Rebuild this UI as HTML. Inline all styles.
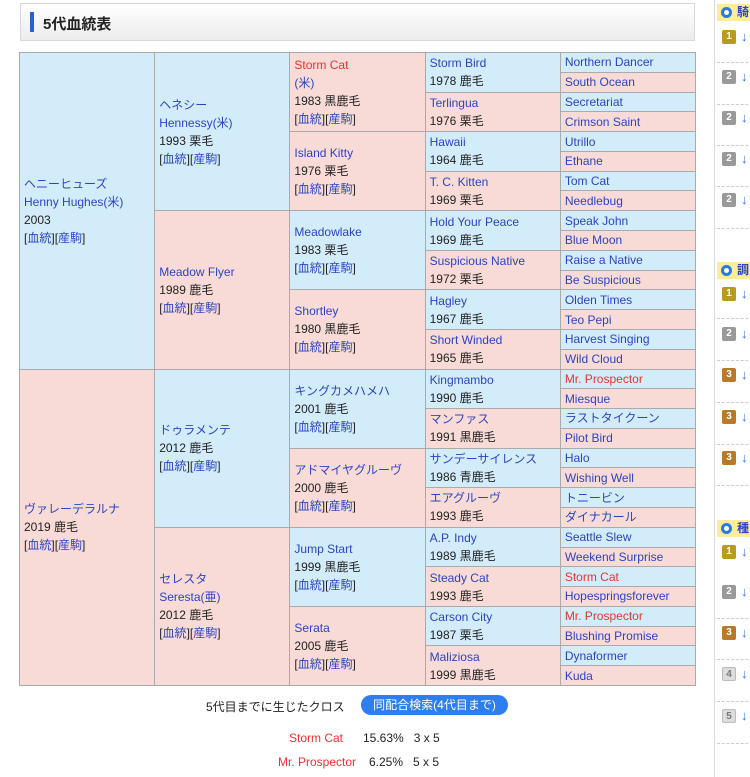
<!DOCTYPE html>
<html><head><meta charset="utf-8"><style>
*{margin:0;padding:0;box-sizing:border-box}
body{width:750px;height:777px;overflow:hidden;background:#fff;font-family:"Liberation Sans","Noto Sans CJK JP",sans-serif;font-size:12px;color:#222;position:relative}
a{color:#2b44c4;text-decoration:none}
.r{color:#e8332f}
.hd{position:absolute;left:20px;top:3px;width:675px;height:38px;border:1px solid #d8d8d8;background:linear-gradient(#fff,#ececec);}
.hd .bar{position:absolute;left:9px;top:8px;width:4px;height:20px;background:#2a5fd6}
.hd .t{position:absolute;left:22px;top:9px;font-size:15px;font-weight:bold;color:#222}
.tbl{position:absolute;left:19px;top:52px;width:677px;height:634px;display:flex;border:1px solid #aaa;background:#aaa}
.col{display:flex;flex-direction:column;width:135px;}
.col+.col{margin-left:1px}
.c{flex:1;display:flex;flex-direction:column;justify-content:center;padding-left:4px;line-height:18px;min-height:0}
.c+.c{margin-top:1px}
.c4{justify-content:flex-start;line-height:19px;padding-top:0}
.c5{line-height:18px}
.b{background:#d3ecfa}.p{background:#f8dbd6}
.side{position:absolute;left:714px;top:0;width:36px;height:777px;border-left:1px solid #ddd}
.sh{position:absolute;left:2px;width:40px;height:17px;background:#fbeca0;font-size:12px;font-weight:bold;color:#2b44c4;line-height:17px;padding-left:20px}
.sh:before{content:"";position:absolute;left:4px;top:3px;width:11px;height:11px;border-radius:50%;background:#2a7be0;box-shadow:inset 0 0 0 3px #2a7be0,inset 0 0 0 6px #fff}
.bd{position:absolute;left:7px;width:14px;height:14px;border-radius:2px;color:#fff;font-size:10px;line-height:14px;text-align:center;font-weight:bold}
.g1{background:#b89a20}.g2{background:#999}.g3{background:#b8792a}.g4{background:#ddd;color:#777;border:1px solid #bbb}
.ar{position:absolute;left:26px;width:8px;height:14px;color:#2a6ee0;font-size:13px;line-height:14px;font-weight:bold}
.ds{position:absolute;left:2px;width:36px;border-top:1px dashed #ccc}
</style></head><body>
<div class="hd"><div class="bar"></div><div class="t">5代血統表</div></div>
<div class="tbl">
<div class="col">
<div class="c b"><a>ヘニーヒューズ</a><a>Henny Hughes(米)</a><span>2003</span><span>[<a>血統</a>][<a>産駒</a>]</span></div>
<div class="c p"><a>ヴァレーデラルナ</a><span>2019 鹿毛</span><span>[<a>血統</a>][<a>産駒</a>]</span></div>
</div>
<div class="col">
<div class="c b"><a>ヘネシー</a><a>Hennessy(米)</a><span>1993 栗毛</span><span>[<a>血統</a>][<a>産駒</a>]</span></div>
<div class="c p"><a>Meadow Flyer</a><span>1989 鹿毛</span><span>[<a>血統</a>][<a>産駒</a>]</span></div>
<div class="c b"><a>ドゥラメンテ</a><span>2012 鹿毛</span><span>[<a>血統</a>][<a>産駒</a>]</span></div>
<div class="c p"><a>セレスタ</a><a>Seresta(亜)</a><span>2012 鹿毛</span><span>[<a>血統</a>][<a>産駒</a>]</span></div>
</div>
<div class="col">
<div class="c p"><a class="r">Storm Cat</a><a>(米)</a><span>1983 黒鹿毛</span><span>[<a>血統</a>][<a>産駒</a>]</span></div>
<div class="c p"><a>Island Kitty</a><span>1976 栗毛</span><span>[<a>血統</a>][<a>産駒</a>]</span></div>
<div class="c b"><a>Meadowlake</a><span>1983 栗毛</span><span>[<a>血統</a>][<a>産駒</a>]</span></div>
<div class="c p"><a>Shortley</a><span>1980 黒鹿毛</span><span>[<a>血統</a>][<a>産駒</a>]</span></div>
<div class="c b"><a>キングカメハメハ</a><span>2001 鹿毛</span><span>[<a>血統</a>][<a>産駒</a>]</span></div>
<div class="c p"><a>アドマイヤグルーヴ</a><span>2000 鹿毛</span><span>[<a>血統</a>][<a>産駒</a>]</span></div>
<div class="c b"><a>Jump Start</a><span>1999 黒鹿毛</span><span>[<a>血統</a>][<a>産駒</a>]</span></div>
<div class="c p"><a>Serata</a><span>2005 鹿毛</span><span>[<a>血統</a>][<a>産駒</a>]</span></div>
</div>
<div class="col">
<div class="c b"><a>Storm Bird</a><span>1978 鹿毛</span></div>
<div class="c p"><a>Terlingua</a><span>1976 栗毛</span></div>
<div class="c b"><a>Hawaii</a><span>1964 鹿毛</span></div>
<div class="c p"><a>T. C. Kitten</a><span>1969 栗毛</span></div>
<div class="c b"><a>Hold Your Peace</a><span>1969 鹿毛</span></div>
<div class="c p"><a>Suspicious Native</a><span>1972 栗毛</span></div>
<div class="c b"><a>Hagley</a><span>1967 鹿毛</span></div>
<div class="c p"><a>Short Winded</a><span>1965 鹿毛</span></div>
<div class="c b"><a>Kingmambo</a><span>1990 鹿毛</span></div>
<div class="c p"><a>マンファス</a><span>1991 黒鹿毛</span></div>
<div class="c b"><a>サンデーサイレンス</a><span>1986 青鹿毛</span></div>
<div class="c p"><a>エアグルーヴ</a><span>1993 鹿毛</span></div>
<div class="c b"><a>A.P. Indy</a><span>1989 黒鹿毛</span></div>
<div class="c p"><a>Steady Cat</a><span>1993 鹿毛</span></div>
<div class="c b"><a>Carson City</a><span>1987 栗毛</span></div>
<div class="c p"><a>Maliziosa</a><span>1999 黒鹿毛</span></div>
</div>
<div class="col">
<div class="c c5 b"><a>Northern Dancer</a></div><div class="c c5 p"><a>South Ocean</a></div>
<div class="c c5 b"><a>Secretariat</a></div><div class="c c5 p"><a>Crimson Saint</a></div>
<div class="c c5 b"><a>Utrillo</a></div><div class="c c5 p"><a>Ethane</a></div>
<div class="c c5 b"><a>Tom Cat</a></div><div class="c c5 p"><a>Needlebug</a></div>
<div class="c c5 b"><a>Speak John</a></div><div class="c c5 p"><a>Blue Moon</a></div>
<div class="c c5 b"><a>Raise a Native</a></div><div class="c c5 p"><a>Be Suspicious</a></div>
<div class="c c5 b"><a>Olden Times</a></div><div class="c c5 p"><a>Teo Pepi</a></div>
<div class="c c5 b"><a>Harvest Singing</a></div><div class="c c5 p"><a>Wild Cloud</a></div>
<div class="c c5 b"><a class="r">Mr. Prospector</a></div><div class="c c5 p"><a>Miesque</a></div>
<div class="c c5 b"><a>ラストタイクーン</a></div><div class="c c5 p"><a>Pilot Bird</a></div>
<div class="c c5 b"><a>Halo</a></div><div class="c c5 p"><a>Wishing Well</a></div>
<div class="c c5 b"><a>トニービン</a></div><div class="c c5 p"><a>ダイナカール</a></div>
<div class="c c5 b"><a>Seattle Slew</a></div><div class="c c5 p"><a>Weekend Surprise</a></div>
<div class="c c5 b"><a class="r">Storm Cat</a></div><div class="c c5 p"><a>Hopespringsforever</a></div>
<div class="c c5 b"><a class="r">Mr. Prospector</a></div><div class="c c5 p"><a>Blushing Promise</a></div>
<div class="c c5 b"><a>Dynaformer</a></div><div class="c c5 p"><a>Kuda</a></div>
</div>
</div>
<div style="position:absolute;left:206px;top:698px;font-size:12px">5代目までに生じたクロス</div>
<div style="position:absolute;left:361px;top:695px;width:147px;height:20px;border-radius:10px;background:#2f7ef0;color:#fff;font-size:12px;line-height:20px;text-align:center">同配合検索(4代目まで)</div>
<div style="position:absolute;left:200px;top:731px;width:143px;text-align:right;color:#e8332f">Storm Cat</div>
<div style="position:absolute;left:363px;top:731px">15.63%&nbsp;&nbsp;&nbsp;3 x 5</div>
<div style="position:absolute;left:200px;top:755px;width:156px;text-align:right;color:#e8332f">Mr. Prospector</div>
<div style="position:absolute;left:369px;top:755px">6.25%&nbsp;&nbsp;&nbsp;5 x 5</div>
<div class="side">
<div class="sh" style="top:4px">騎</div>
<div class="bd g1" style="top:30px">1</div><div class="ar" style="top:30px">↓</div><div class="ds" style="top:62px"></div>
<div class="bd g2" style="top:70px">2</div><div class="ar" style="top:70px">↓</div><div class="ds" style="top:104px"></div>
<div class="bd g2" style="top:111px">2</div><div class="ar" style="top:111px">↓</div><div class="ds" style="top:145px"></div>
<div class="bd g2" style="top:152px">2</div><div class="ar" style="top:152px">↓</div><div class="ds" style="top:186px"></div>
<div class="bd g2" style="top:193px">2</div><div class="ar" style="top:193px">↓</div><div class="ds" style="top:228px"></div>
<div class="sh" style="top:262px">調</div>
<div class="bd g1" style="top:287px">1</div><div class="ar" style="top:287px">↓</div><div class="ds" style="top:318px"></div>
<div class="bd g2" style="top:327px">2</div><div class="ar" style="top:327px">↓</div><div class="ds" style="top:360px"></div>
<div class="bd g3" style="top:368px">3</div><div class="ar" style="top:368px">↓</div><div class="ds" style="top:402px"></div>
<div class="bd g3" style="top:410px">3</div><div class="ar" style="top:410px">↓</div><div class="ds" style="top:444px"></div>
<div class="bd g3" style="top:451px">3</div><div class="ar" style="top:451px">↓</div><div class="ds" style="top:485px"></div>
<div class="sh" style="top:520px">種</div>
<div class="bd g1" style="top:545px">1</div><div class="ar" style="top:545px">↓</div>
<div class="bd g2" style="top:585px">2</div><div class="ar" style="top:585px">↓</div><div class="ds" style="top:618px"></div>
<div class="bd g3" style="top:626px">3</div><div class="ar" style="top:626px">↓</div><div class="ds" style="top:659px"></div>
<div class="bd g4" style="top:667px">4</div><div class="ar" style="top:667px">↓</div><div class="ds" style="top:701px"></div>
<div class="bd g4" style="top:709px">5</div><div class="ar" style="top:709px">↓</div><div class="ds" style="top:743px"></div>
</div>
</body></html>
